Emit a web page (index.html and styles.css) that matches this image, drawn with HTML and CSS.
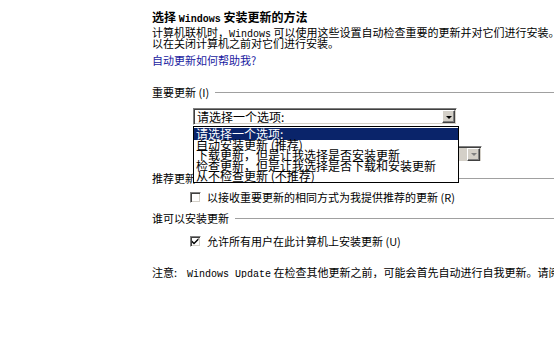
FILE: index.html
```html
<!DOCTYPE html>
<html>
<head>
<meta charset="utf-8">
<link rel="stylesheet" href="styles.css">
</head>
<body>
<div class="page">
  <div class="title">选择 <span class="lat">Windows</span> 安装更新的方法</div>
  <div class="desc">
    <div class="line">计算机联机时，<span class="lat">Windows</span> 可以使用这些设置自动检查重要的更新并对它们进行安装。如果有可用的更新，也可</div>
    <div class="line">以在关闭计算机之前对它们进行安装。</div>
  </div>
  <a class="help" href="#">自动更新如何帮助我?</a>

  <div class="group g1"><span class="glabel">重要更新 (I)</span><span class="rule"></span></div>

  <div class="selwrap">
    <div class="select">
      <span class="seltext">请选择一个选项:</span>
      <span class="btn"><span class="tri"></span></span>
    </div>
    <div class="list">
      <div class="item sel">请选择一个选项:</div>
      <div class="item">自动安装更新 (推荐)</div>
      <div class="item">下载更新，但是让我选择是否安装更新</div>
      <div class="item">检查更新，但是让我选择是否下载和安装更新</div>
      <div class="item">从不检查更新 (不推荐)</div>
    </div>
  </div>

  <div class="select2row">
    <div class="select2"><span class="btn dis"><span class="tri"></span></span></div>
  </div>

  <div class="group g2"><span class="glabel">推荐更新</span><span class="rule"></span></div>
  <div class="check c1"><span class="box"></span><span>以接收重要更新的相同方式为我提供推荐的更新 (R)</span></div>

  <div class="group g3"><span class="glabel">谁可以安装更新</span><span class="rule"></span></div>
  <div class="check c2"><span class="box on"><svg width="9" height="9" viewBox="0 0 9 9"><path d="M1 3.5 L3 5.5 L7.5 1 L7.5 3 L3 7.5 L1 5.5 Z" fill="#000"/></svg></span><span>允许所有用户在此计算机上安装更新 (U)</span></div>

  <div class="note">注意:<span class="gap"></span><span class="lat">Windows Update</span> 在检查其他更新之前，可能会首先自动进行自我更新。请阅读联机的隐私声明。</div>
</div>
</body>
</html>
```
FILE: styles.css
```css
html, body {
  margin: 0;
  padding: 0;
  background: #fff;
  overflow: hidden;
}
body {
  width: 554px;
  height: 360px;
  font-family: "Noto Sans CJK SC", "Noto Sans", sans-serif;
  font-size: 11px;
  color: #000;
}
.page {
  margin-left: 152px;
  padding-top: 10px;
  width: 402px;
  overflow: hidden;
  white-space: nowrap;
}
.lat {
  font-family: "Liberation Mono", "DejaVu Sans Mono", monospace;
  font-size: 10px;
}
.gap {
  display: inline-block;
  width: 10px;
}
.title {
  font-size: 12px;
  font-weight: bold;
  line-height: 13px;
  height: 13px;
}
.desc {
  margin-top: 4px;
}
.line {
  line-height: 11px;
  height: 11px;
}
.help {
  display: block;
  margin-top: 5px;
  line-height: 12px;
  height: 12px;
  color: #1a1aa0;
  text-decoration: none;
}
.group {
  display: flex;
  align-items: center;
  line-height: 11px;
  height: 11px;
}
.g1 { margin-top: 21px; }
.g2 { margin-top: 11px; }
.g3 { margin-top: 10px; }
.glabel { flex: none; }
.rule {
  flex: 1;
  height: 1px;
  background: #a0a0a0;
  margin-left: 6px;
}
.selwrap {
  position: relative;
  margin: 10px 0 0 41px;
  width: 266px;
  height: 17px;
}
.select {
  box-sizing: border-box;
  width: 264px;
  height: 17px;
  border: 1px solid;
  border-color: #808080 #fff #fff #808080;
  box-shadow: inset 1px 1px 0 #404040, inset -1px -1px 0 #d4d0c8;
  display: flex;
  align-items: center;
  padding-left: 3px;
  font-size: 12px;
  line-height: 15px;
  background: #fff;
}
.seltext { flex: 1; }
.btn {
  box-sizing: border-box;
  width: 13px;
  height: 13px;
  margin-right: 1px;
  background: #d4d0c8;
  border: 1px solid;
  border-color: #fff #404040 #404040 #fff;
  box-shadow: inset -1px -1px 0 #808080;
  display: flex;
  align-items: center;
  justify-content: center;
}
.tri {
  width: 0;
  height: 0;
  border-left: 3px solid transparent;
  border-right: 3px solid transparent;
  border-top: 3px solid #000;
  margin-top: 1px;
}
.btn.dis .tri { border-top-color: #808080; }
.list {
  position: absolute;
  left: 0;
  top: 18px;
  box-sizing: border-box;
  width: 266px;
  border: 1px solid #000;
  background: #fff;
  z-index: 2;
  padding-top: 1px;
}
.item {
  font-size: 12px;
  height: 10.4px;
  line-height: 10.4px;
  padding-left: 2px;
}
.item.sel {
  background: #0a246a;
  color: #fff;
  height: 12px;
  line-height: 12px;
}
.select2row {
  margin: 21px 0 0 200px;
  height: 16px;
}
.select2 {
  box-sizing: border-box;
  width: 130px;
  height: 16px;
  border: 1px solid;
  border-color: #808080 #fff #fff #808080;
  box-shadow: inset 1px 1px 0 #404040, inset -1px -1px 0 #d4d0c8;
  background: #d4d0c8;
  display: flex;
  justify-content: flex-end;
  align-items: center;
}
.check {
  display: flex;
  align-items: center;
  margin-left: 38px;
  height: 12px;
  line-height: 12px;
}
.c1 { margin-top: 7px; }
.c2 { margin-top: 11px; }
.box {
  box-sizing: border-box;
  width: 11px;
  height: 11px;
  border: 1px solid;
  border-color: #808080 #fff #fff #808080;
  box-shadow: inset 1px 1px 0 #404040, inset -1px -1px 0 #d4d0c8;
  background: #fff;
  margin-right: 6px;
  flex: none;
  display: flex;
  align-items: center;
  justify-content: center;
}
.note {
  margin-top: 19px;
  line-height: 12px;
  height: 12px;
}
```
